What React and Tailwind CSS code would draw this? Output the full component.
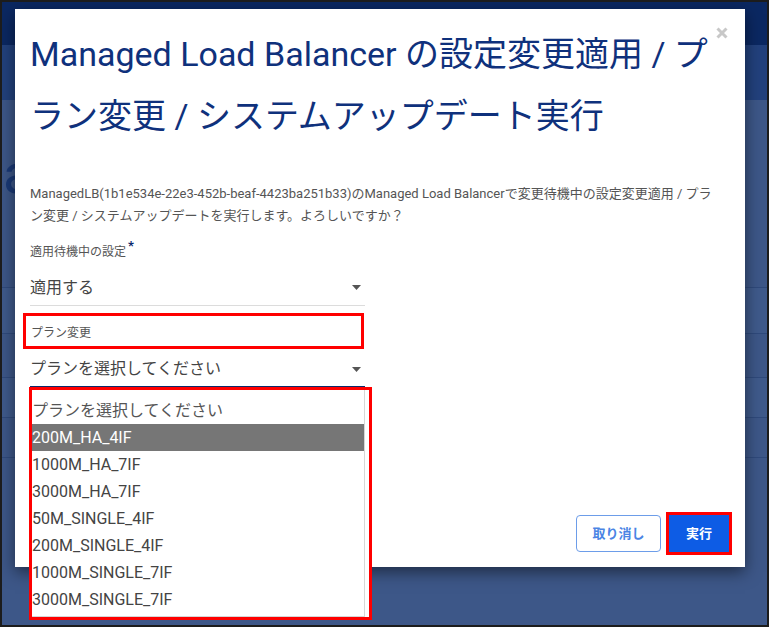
import React from "react";

const plans = [
  "200M_HA_4IF",
  "1000M_HA_7IF",
  "3000M_HA_7IF",
  "50M_SINGLE_4IF",
  "200M_SINGLE_4IF",
  "1000M_SINGLE_7IF",
  "3000M_SINGLE_7IF",
];

function Caret() {
  return (
    <svg width="9" height="5" viewBox="0 0 9 5">
      <path d="M0 0h9L4.5 5z" fill="#555" />
    </svg>
  );
}

export default function App() {
  return (
    <div className="relative w-[769px] h-[627px] overflow-hidden border-2 border-[#1c1c1c] bg-[#3d5788] font-['Roboto','Noto_Sans_CJK_JP',sans-serif]">
      {/* page behind the modal */}
      <div className="h-[43px] bg-[#0b2862]" />
      <div className="h-[55px] bg-[#22417d]" />
      <div className="pt-[46px] h-[140px]">
        <h1 className="pl-[1px] text-[56px] leading-none text-[#1a3977] whitespace-nowrap">a</h1>
      </div>
      <div className="h-[48px] border-b border-[#2f4a7c]" />
      <div className="h-[46px] border-b border-[#2f4a7c] bg-[#3f5a8b]" />
      <div className="h-[44px] border-b border-[#2f4a7c]" />
      <div className="h-[40px] border-b border-[#2f4a7c] bg-[#3f5a8b]" />
      <div className="h-[40px] border-b border-[#2f4a7c]" />

      {/* modal */}
      <div className="absolute left-[13px] top-[7px] w-[730px] h-[558px] bg-white shadow-[0_5px_15px_rgba(0,0,0,0.5)] flex flex-col px-[15px]">
        <button className="absolute right-[16px] top-[18px]">
          <svg width="14" height="12" viewBox="0 0 14 12">
            <path d="M2.5 1.5l9 9M11.5 1.5l-9 9" stroke="#c8c8c8" strokeWidth="3" />
          </svg>
        </button>

        <h2 className="pt-[14px] text-[34px] leading-[62px] text-[#0f317c] whitespace-nowrap">
          Managed Load Balancer の設定変更適用 / プ
          <br />
          ラン変更 / システムアップデート実行
        </h2>

        <p className="mt-[36px] text-[13px] leading-[22px] text-[#555] whitespace-nowrap">
          ManagedLB(1b1e534e-22e3-452b-beaf-4423ba251b33)のManaged Load Balancerで変更待機中の設定変更適用 / プラ
          <br />
          ン変更 / システムアップデートを実行します。よろしいですか？
        </p>

        <div className="mt-[16px] h-[18px] text-[12px] leading-[18px] text-[#555] flex items-start">
          適用待機中の設定
          <span className="ml-[2px] -mt-[6px] text-[13px] font-bold text-[#0b2a6b]">*</span>
        </div>

        <div className="mt-[5px] w-[335px] h-[40px] pt-[4px] border-b border-[#dcdcdc] flex items-center justify-between pr-[4px]">
          <span className="text-[16px] text-[#444]">適用する</span>
          <Caret />
        </div>

        <div className="mt-[7px] -ml-[7px] w-[341px] h-[36px] pt-[3px] pl-[5px] border-[3px] border-[#ff0000] flex items-center text-[12px] text-[#555]">
          プラン変更
        </div>

        <div className="w-[335px] h-[39px] pt-[3px] border-b-2 border-[#0b2a6b] flex items-center justify-between pr-[4px]">
          <span className="text-[16px] text-[#444]">プランを選択してください</span>
          <Caret />
        </div>

        {/* open plan list */}
        <div className="absolute left-[14px] top-[378px] w-[343px] h-[233px] border-[3px] border-[#ff0000] bg-white">
          <div className="mr-[4px] h-full bg-white border-r border-b border-[#d6d6d6] pt-[7px] text-[16px] text-[#444]">
            <div className="h-[27px] flex items-center text-[#555]">プランを選択してください</div>
            {plans.map((p, i) => (
              <div
                key={p}
                className={
                  i === 0
                    ? "h-[27px] flex items-center bg-[#767676] text-white"
                    : "h-[27px] flex items-center"
                }
              >
                {p}
              </div>
            ))}
          </div>
        </div>

        <div className="mt-auto pb-[12px] -mr-[2px] flex items-center justify-end gap-[5px]">
          <button className="w-[85px] h-[37px] rounded-[4px] border border-[#6d9de9] text-[13px] font-bold text-[#4a84e4]">
            取り消し
          </button>
          <div className="border-[3px] border-[#ff0000]">
            <button className="block w-[60px] h-[37px] bg-[#0d5ce5] text-[13px] font-bold text-white">
              実行
            </button>
          </div>
        </div>
      </div>
    </div>
  );
}
